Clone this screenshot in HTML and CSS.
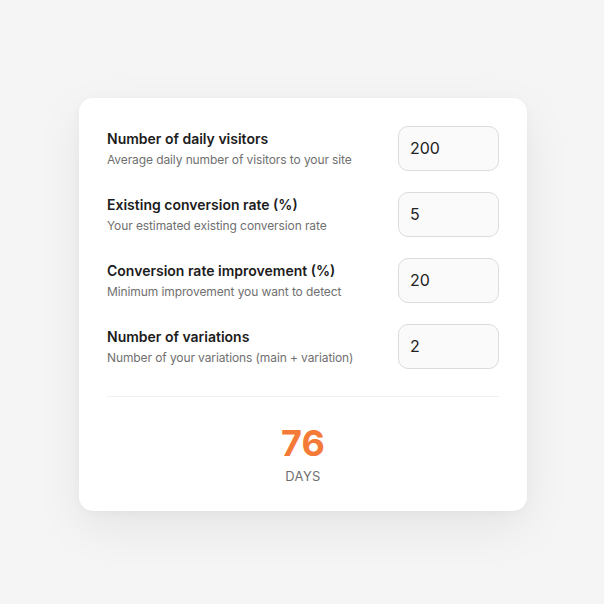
FILE: index.html
```html
<!DOCTYPE html>
<html>
<head>
<meta charset="utf-8">
<link rel="stylesheet" href="styles.css">
</head>
<body>
<div class="page">
  <div class="card">
    <div class="fields">
      <div class="row">
        <div class="label">
          <div class="title">Number of daily visitors</div>
          <div class="desc">Average daily number of visitors to your site</div>
        </div>
        <div class="input">200</div>
      </div>
      <div class="row">
        <div class="label">
          <div class="title">Existing conversion rate (%)</div>
          <div class="desc">Your estimated existing conversion rate</div>
        </div>
        <div class="input">5</div>
      </div>
      <div class="row">
        <div class="label">
          <div class="title">Conversion rate improvement (%)</div>
          <div class="desc">Minimum improvement you want to detect</div>
        </div>
        <div class="input">20</div>
      </div>
      <div class="row">
        <div class="label">
          <div class="title">Number of variations</div>
          <div class="desc">Number of your variations (main + variation)</div>
        </div>
        <div class="input">2</div>
      </div>
    </div>
    <div class="divider"></div>
    <div class="result">
      <div class="value">76</div>
      <div class="unit">DAYS</div>
    </div>
  </div>
</div>
</body>
</html>
```
FILE: styles.css
```css
* { box-sizing: border-box; }
html, body { margin: 0; padding: 0; }
body {
  background: #f5f5f5;
  font-family: Inter, "Noto Sans", sans-serif;
  width: 604px;
  height: 604px;
}
.page {
  padding-top: 98px;
  padding-left: 79px;
}
.card {
  width: 448px;
  height: 413px;
  background: #ffffff;
  border-radius: 14px;
  box-shadow: 0 16px 48px rgba(0,0,0,0.07), 0 2px 8px rgba(0,0,0,0.03);
  padding: 28px 28px 0 28px;
}
.fields {
  display: flex;
  flex-direction: column;
  gap: 22px;
}
.row {
  display: flex;
  align-items: center;
  justify-content: space-between;
  height: 44px;
}
.label {
  display: flex;
  flex-direction: column;
  gap: 5px;
}
.title {
  font-size: 14px;
  font-weight: 600;
  color: #1c1c1c;
  line-height: 17px;
}
.desc {
  font-size: 12px;
  letter-spacing: -0.1px;
  color: #707070;
  line-height: 15px;
}
.input {
  width: 101px;
  height: 45px;
  border: 1px solid #dcdcdc;
  border-radius: 10px;
  background: #fafafa;
  display: flex;
  align-items: center;
  padding-left: 11px;
  font-size: 16px;
  color: #222;
}
.divider {
  margin-top: 28px;
  height: 1px;
  background: #efefef;
}
.result {
  display: flex;
  flex-direction: column;
  align-items: center;
  padding-top: 26px;
}
.value {
  font-size: 36px;
  font-weight: 700;
  color: #f47a37;
  line-height: 40px;
}
.unit {
  margin-top: 5px;
  font-size: 13px;
  color: #6f6f6f;
  letter-spacing: 0.3px;
  line-height: 16px;
}
```
